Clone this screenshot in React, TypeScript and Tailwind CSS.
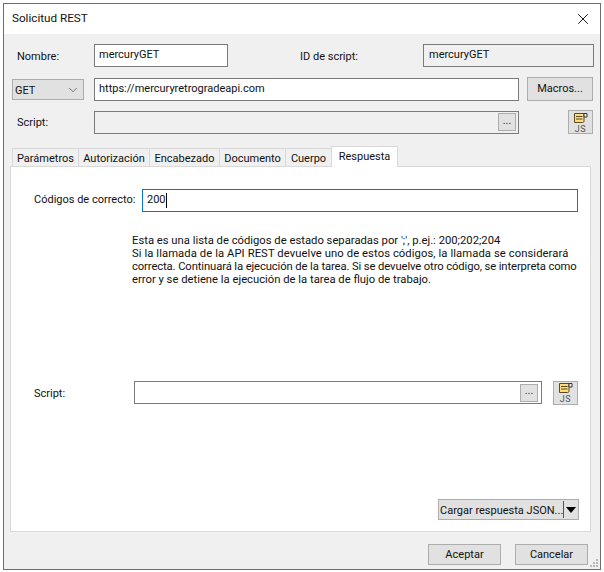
import { ChevronDown, X } from 'lucide-react';

const tabs = [
  { label: 'Parámetros', width: 'w-[66px]' },
  { label: 'Autorización', width: 'w-[71px]' },
  { label: 'Encabezado', width: 'w-[70px]' },
  { label: 'Documento', width: 'w-[66px]' },
  { label: 'Cuerpo', width: 'w-[46px]' },
];

const JsButton = () => (
  <button className="w-[25px] h-[24px] border border-[#adadad] bg-[#e1e1e1] flex items-center justify-center">
    <svg width="17" height="21" viewBox="0 0 17 21">
      <path d="M2.500 1.500h9.500v7.500c0 1-.5 1.500-1.500 1.500H2.500z" fill="#fcdc7c" stroke="#5a4a20" strokeWidth="1" />
      <path d="M12 1.500h3v3.500h-3z" fill="#f3f3f3" stroke="#333" strokeWidth="1" />
      <path d="M4 4.500h6.500M4 7h6.500" stroke="#5a4a20" strokeWidth="1" />
      <text x="8.500" y="19.500" textAnchor="middle" fontSize="9" fill="#555" letterSpacing="0.500" fontFamily="Roboto, sans-serif">JS</text>
    </svg>
  </button>
);

const DotsButton = () => (
  <button className="w-[18px] h-[18px] border border-[#adadad] bg-[#e1e1e1] flex items-center justify-center text-[11px] leading-none pb-1 text-[#333]">
    ...
  </button>
);

export default function App() {
  return (
    <div className="w-[604px] h-[572px] bg-white p-[3px] text-[#111] text-[11px] font-['Roboto','Noto_Sans',sans-serif]">
      <div className="relative w-[598px] h-[567px] border border-[#6d6d6d] bg-[#f0f0f0] flex flex-col">
        {/* Title bar */}
        <div className="h-[30px] bg-white flex items-center justify-between pl-2 pr-[8px] shrink-0">
          <span className="text-[11.7px]">Solicitud REST</span>
          <X size={18} strokeWidth={1.2} className="text-black" />
        </div>

        {/* Nombre row */}
        <div className="flex items-center h-[23px] mt-[10px] ml-[13px]">
          <span className="w-[77px] pt-[3px]">Nombre:</span>
          <div className="w-[134px] h-[23px] border border-[#7a7a7a] bg-white px-1 pt-px leading-[18px]">mercuryGET</div>
          <span className="ml-[72px] w-[123px] pt-[3px]">ID de script:</span>
          <div className="w-[171px] h-[23px] border border-[#7a7a7a] bg-[#f0f0f0] pl-[5px] pt-px leading-[18px]">mercuryGET</div>
        </div>

        {/* URL row */}
        <div className="flex items-start h-[24px] mt-[10px] ml-[8px]">
          <div className="w-[72px] h-[21px] mt-[2px] border border-[#adadad] bg-[#e1e1e1] flex items-center justify-between pl-[2px] pr-[3px]">
            <span className="pt-[3px]">GET</span>
            <ChevronDown size={14} strokeWidth={1.2} className="text-[#444]" />
          </div>
          <div className="ml-[10px] w-[425px] h-[23px] mt-[1px] border border-[#7a7a7a] bg-white px-1 pt-px leading-[18px]">
            https://mercuryretrogradeapi.com
          </div>
          <button className="ml-[8px] w-[66px] h-[24px] border border-[#adadad] bg-[#e1e1e1] pt-px">Macros...</button>
        </div>

        {/* Script row */}
        <div className="flex items-center h-[24px] mt-[9px] ml-[13px]">
          <span className="w-[77px] pt-[3px]">Script:</span>
          <div className="w-[425px] h-[23px] border border-[#7a7a7a] bg-[#f0f0f0] flex items-center justify-end pr-[2px]">
            <DotsButton />
          </div>
          <div className="ml-[49px]">
            <JsButton />
          </div>
        </div>

        {/* Tabs */}
        <div className="flex items-end h-[20px] mt-[12px] ml-[8px] relative z-10">
          {tabs.map((tab) => (
            <div
              key={tab.label}
              className={`${tab.width} h-[18px] border border-[#d9d9d9] border-b-0 border-r-0 bg-[#f0f0f0] text-center pt-px leading-[18px] whitespace-nowrap`}
            >
              {tab.label}
            </div>
          ))}
          <div className="w-[67px] h-[21px] -mb-px border border-[#d9d9d9] border-b-0 bg-white text-center pt-px leading-[17px]">
            Respuesta
          </div>
        </div>

        {/* Panel */}
        <div className="w-[581px] h-[366px] ml-[6px] border border-[#d9d9d9] bg-white flex flex-col">
          <div className="flex items-center h-[23px] mt-[22px] ml-[23px]">
            <span className="w-[108px] whitespace-nowrap">Códigos de correcto:</span>
            <div className="w-[436px] h-[23px] border border-[#0078d7] px-1 flex items-center">
              <span>200</span>
              <span className="w-px h-[15px] bg-black" />
            </div>
          </div>

          <p className="ml-[121px] mt-[22px] w-[450px] text-[11.25px] leading-[13px] whitespace-nowrap">
            <span className="block">Esta es una lista de códigos de estado separadas por ';', p.ej.: 200;202;204</span>
            <span className="block tracking-[0.08px]">Si la llamada de la API REST devuelve uno de estos códigos, la llamada se considerará</span>
            <span className="block tracking-[-0.11px]">correcta. Continuará la ejecución de la tarea. Si se devuelve otro código, se interpreta como</span>
            <span className="block">error y se detiene la ejecución de la tarea de flujo de trabajo.</span>
          </p>

          <div className="flex items-center h-[25px] mt-[94px] ml-[23px]">
            <span className="w-[100px] pt-[3px]">Script:</span>
            <div className="w-[408px] h-[23px] border border-[#7a7a7a] bg-white flex items-center justify-end pr-[3px]">
              <DotsButton />
            </div>
            <div className="ml-[11px]">
              <JsButton />
            </div>
          </div>

          <div className="flex justify-end mt-[94px] mr-[11px]">
            <div className="w-[141px] h-[21px] border border-[#adadad] bg-[#e1e1e1] flex items-center overflow-hidden">
              <span className="flex-1 min-w-0 whitespace-nowrap pt-px leading-[19px] pl-px">Cargar respuesta JSON...</span>
              <span className="w-px h-[17px] bg-[#555] shrink-0" />
              <span className="w-[14px] shrink-0 flex justify-center">
                <span className="w-0 h-0 border-x-[5px] border-x-transparent border-t-[6px] border-t-black" />
              </span>
            </div>
          </div>
        </div>

        {/* Footer */}
        <div className="flex justify-end gap-[14px] mt-[12px] mr-[12px]">
          <button className="w-[73px] h-[21px] border border-[#adadad] bg-[#e1e1e1] pt-px">Aceptar</button>
          <button className="w-[73px] h-[21px] border border-[#adadad] bg-[#e1e1e1] pt-px">Cancelar</button>
        </div>

        {/* Resize grip */}
        <svg className="absolute right-px bottom-px" width="10" height="10" viewBox="0 0 10 10">
          <path d="M7 1h2v2H7zM4 4h2v2H4zM7 4h2v2H7zM1 7h2v2H1zM4 7h2v2H4zM7 7h2v2H7z" fill="#b8b8b8" />
        </svg>
      </div>
    </div>
  );
}
